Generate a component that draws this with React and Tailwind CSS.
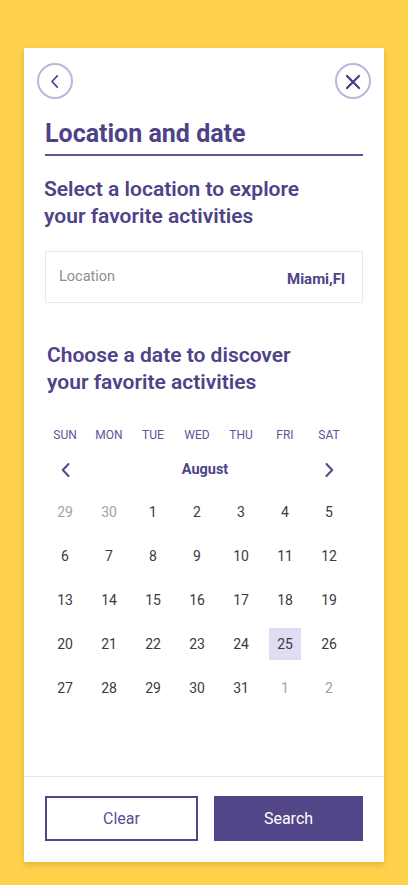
import React, { useState } from "react";

// Weekday labels and the August grid (with trailing days from Jul / Sep)
const weekdays = ["SUN", "MON", "TUE", "WED", "THU", "FRI", "SAT"];

const weeks = [
  [
    { d: 29, out: true },
    { d: 30, out: true },
    { d: 1 },
    { d: 2 },
    { d: 3 },
    { d: 4 },
    { d: 5 },
  ],
  [6, 7, 8, 9, 10, 11, 12].map((d) => ({ d })),
  [13, 14, 15, 16, 17, 18, 19].map((d) => ({ d })),
  [20, 21, 22, 23, 24, 25, 26].map((d) => ({ d })),
  [
    { d: 27 },
    { d: 28 },
    { d: 29 },
    { d: 30 },
    { d: 31 },
    { d: 1, out: true },
    { d: 2, out: true },
  ],
];

const ChevronLeft = ({ w = 9, h = 14, stroke = 2 }) => (
  <svg width={w} height={h} viewBox="0 0 9 14" fill="none">
    <path
      d="M7.5 1 L1.8 7 L7.5 13"
      stroke="currentColor"
      strokeWidth={stroke}
      strokeLinecap="round"
      strokeLinejoin="round"
    />
  </svg>
);

const ChevronRight = ({ w = 9, h = 14, stroke = 2 }) => (
  <svg width={w} height={h} viewBox="0 0 9 14" fill="none">
    <path
      d="M1.5 1 L7.2 7 L1.5 13"
      stroke="currentColor"
      strokeWidth={stroke}
      strokeLinecap="round"
      strokeLinejoin="round"
    />
  </svg>
);

const CloseIcon = () => (
  <svg width="16" height="16" viewBox="0 0 16 16" fill="none">
    <path
      d="M2 2 L14 14 M14 2 L2 14"
      stroke="currentColor"
      strokeWidth="2.2"
      strokeLinecap="round"
    />
  </svg>
);

const App = () => {
  const [selected, setSelected] = useState(25);

  return (
    <div
      className="w-[408px] h-[887px] bg-[#fed14b] pt-[48px] px-[24px] border-b-2 border-white"
      style={{ fontFamily: "Roboto, 'Noto Sans', sans-serif" }}
    >
      <div className="w-[360px] h-[814px] bg-white flex flex-col shadow-[0_3px_6px_rgba(0,0,0,0.12)]">
        {/* Header */}
        <div className="flex justify-between px-[13px] pt-[15px]">
          <button className="w-9 h-9 rounded-full border-2 border-[#bcb7da] flex items-center justify-center text-[#4e4388]">
            <span className="-ml-[2px] mt-[1px] flex">
              <ChevronLeft w={9} h={13} stroke={1.8} />
            </span>
          </button>
          <button className="w-9 h-9 rounded-full border-2 border-[#bcb7da] flex items-center justify-center text-[#463c7e]">
            <span className="mt-[2px] flex">
              <CloseIcon />
            </span>
          </button>
        </div>

        <div className="px-[21px]">
          {/* Title */}
          <h1 className="mt-[20px] text-[25px] leading-[30px] font-bold text-[#4e4388]">
            Location and date
          </h1>
          <div className="mt-[5px] h-[2px] bg-[#5d5299]" />

          {/* Location */}
          <h2 className="mt-[20px] text-[21px] leading-[27px] font-semibold text-[#4e4388] -ml-[1px]">
            Select a location to explore
            <br />
            your favorite activities
          </h2>
          <div className="mt-[21px] h-[52px] border border-[#e8e8e8] flex items-center justify-between pl-[13px] pr-[17px]">
            <span className="text-[14.5px] text-[#8e8e8e]">Location</span>
            <span className="text-[15px] font-bold text-[#4e4388] mt-[4px]">
              Miami,Fl
            </span>
          </div>

          {/* Date */}
          <h2 className="mt-[39px] pl-[2px] text-[21px] leading-[27px] font-semibold text-[#4e4388]">
            Choose a date to discover
            <br />
            your favorite activities
          </h2>

          <div className="mt-[29px] w-[308px] -ml-[2px]">
            <div className="grid grid-cols-7 h-[20px] items-center">
              {weekdays.map((w) => (
                <span
                  key={w}
                  className="text-center text-[12px] text-[#5e5499]"
                >
                  {w}
                </span>
              ))}
            </div>

            <div className="mt-[11px] h-[28px] flex items-center text-[#524689]">
              <button className="w-[44px] flex justify-center">
                <ChevronLeft w={9} h={14} stroke={2} />
              </button>
              <span className="flex-1 text-center pl-[16px] text-[14.5px] font-bold text-[#4e4388]">
                August
              </span>
              <button className="w-[44px] flex justify-center">
                <ChevronRight w={9} h={14} stroke={2} />
              </button>
            </div>

            <div className="mt-[6px]">
              {weeks.map((week, i) => (
                <div key={i} className="grid grid-cols-7 h-[44px]">
                  {week.map((day, j) => {
                    const isSel = !day.out && day.d === selected;
                    return (
                      <div key={j} className="flex items-center justify-center">
                        <button
                          onClick={() => !day.out && setSelected(day.d)}
                          className={`w-8 h-8 flex items-center justify-center text-[14px] ${
                            isSel ? "bg-[#e0dcf2]" : ""
                          } ${day.out ? "text-[#a3a3a3]" : "text-[#3b3b3b]"}`}
                        >
                          {day.d}
                        </button>
                      </div>
                    );
                  })}
                </div>
              ))}
            </div>
          </div>
        </div>

        <div className="flex-1" />

        {/* Footer */}
        <div className="border-t border-[#e3e3e3] px-[21px] pt-[19px] pb-[21px] flex gap-4">
          <button className="flex-1 h-[45px] border-2 border-[#524689] text-[16px] text-[#5a4f94]">
            Clear
          </button>
          <button className="flex-1 h-[45px] bg-[#524689] text-[16px] text-white">
            Search
          </button>
        </div>
      </div>
    </div>
  );
};

export default App;
